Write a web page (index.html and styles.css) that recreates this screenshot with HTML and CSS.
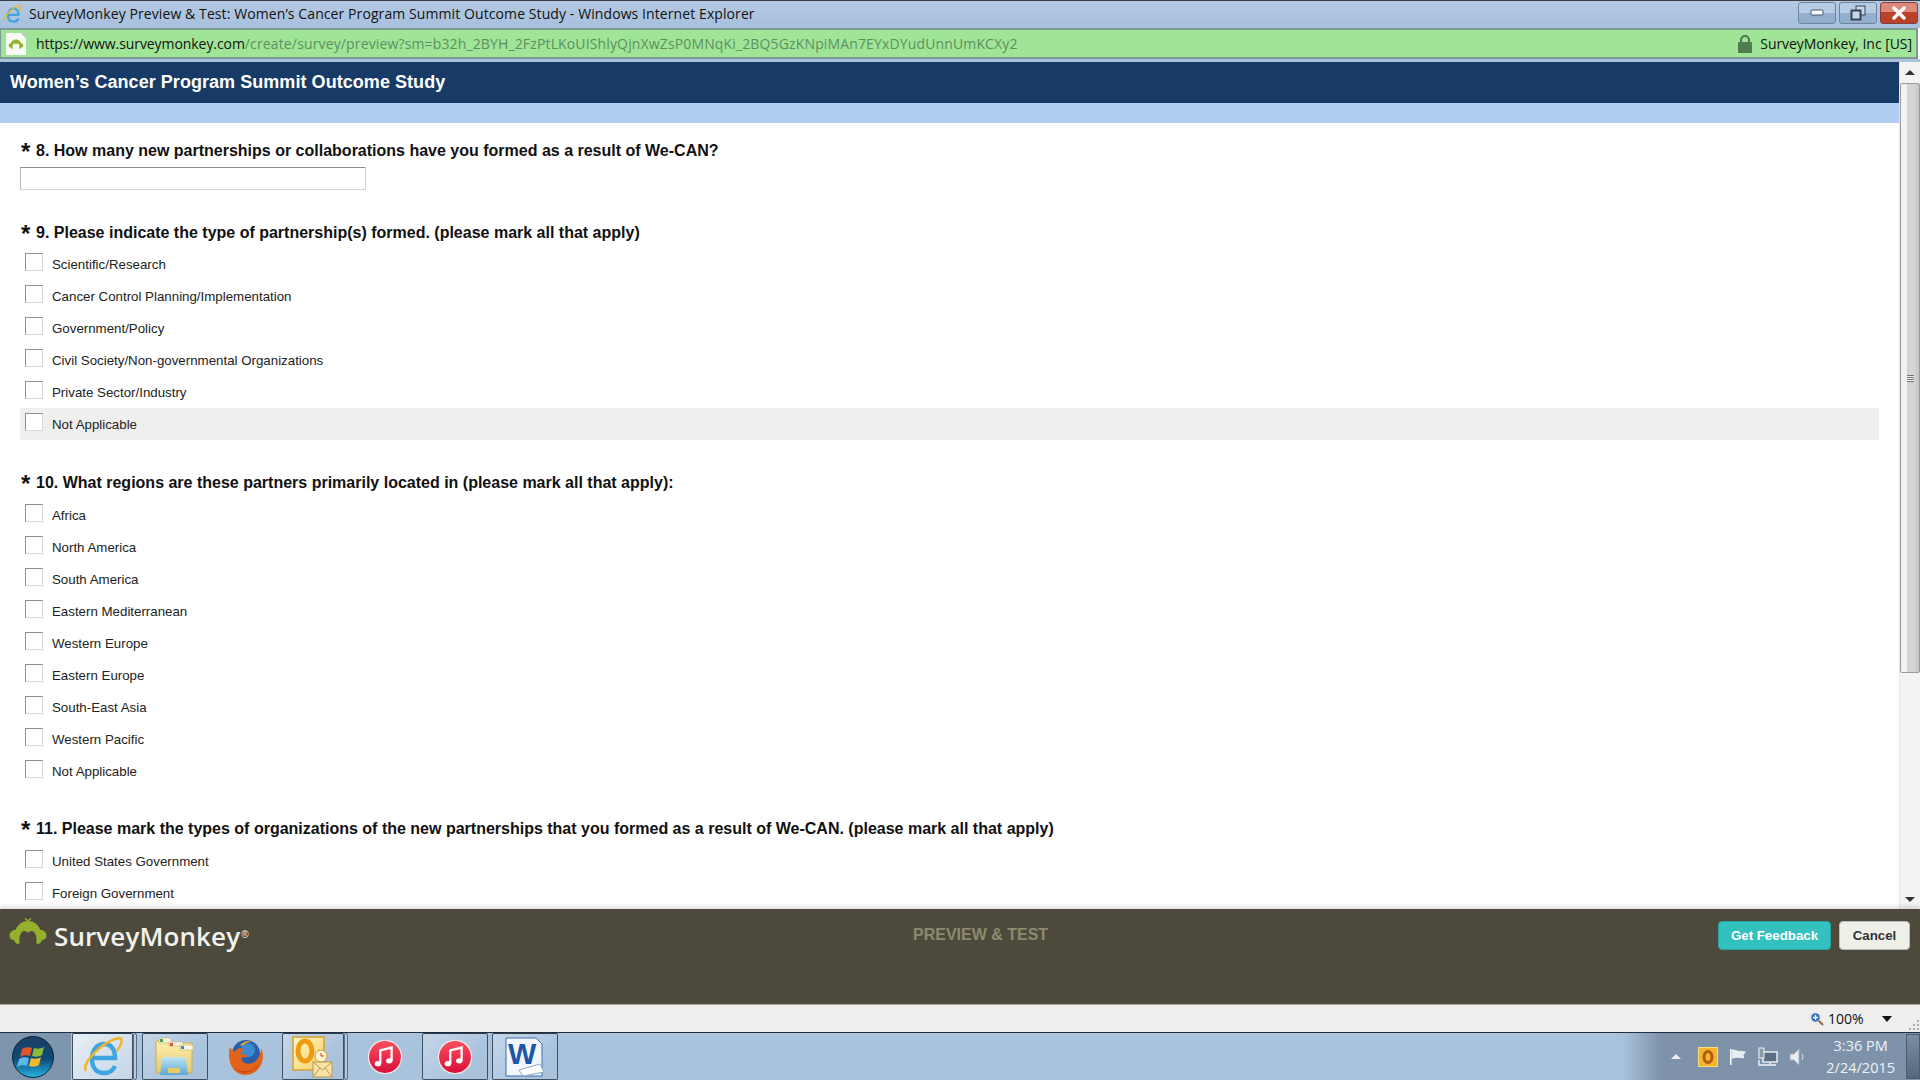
FILE: index.html
```html
<!DOCTYPE html>
<html lang="en">
<head>
  <meta charset="UTF-8">
  <title>SurveyMonkey Preview &amp; Test</title>
  <link rel="stylesheet" href="styles.css">
</head>
<body>

  <div class="title-bar">
    <svg width="20" height="22" viewBox="0 0 44 44">
      <path d="M11 24h23c0-9-4-14-11-14S11 16 11 25s5 14 12 14c5 0 9-2 11-7" fill="none" stroke="#3ea5e0" stroke-width="5"/>
      <path d="M5 36C0 28 22 6 38 3c5 0 2 8-2 13" fill="none" stroke="#f0b62a" stroke-width="3"/>
    </svg>
    <span class="title-text">SurveyMonkey Preview &amp; Test: Women’s Cancer Program Summit Outcome Study - Windows Internet Explorer</span>
    <div class="window-buttons">
      <div class="win-btn">
        <svg width="14" height="8" viewBox="0 0 14 8"><rect x="1" y="1" width="12" height="5" rx="1" fill="#fff" stroke="#44566b"/></svg>
      </div>
      <div class="win-btn">
        <svg width="16" height="16" viewBox="0 0 16 16"><rect x="6" y="1" width="9" height="9" fill="#c9d6e4" stroke="#33445a"/><rect x="1.5" y="5.5" width="9" height="9" fill="#c9d6e4" stroke="#33445a" stroke-width="2"/></svg>
      </div>
      <div class="win-btn win-close">
        <svg width="16" height="14" viewBox="0 0 16 14"><path d="M3 2l10 10M13 2L3 12" stroke="#fff" stroke-width="3.4" stroke-linecap="round"/></svg>
      </div>
    </div>
  </div>

  <div class="address-bar">
    <div class="page-icon">
      <svg width="16" height="12" viewBox="0 0 40 28">
        <path d="M20 3C27 3 31 8 32.500 12C35 12 38.500 14 38.500 17.500C38.500 21 36 22 34 22C33 24.500 31.500 26 30 26C28.500 26 28 25 28.500 23C29 18 27 13 23.500 13C22 13 20.500 14 20 15C19.500 14 18 13 16.500 13C13 13 11 18 11.500 23C12 25 11.500 26 10 26C8.500 26 7 24.500 6 22C4 22 1.500 21 1.500 17.500C1.500 14 5 12 7.500 12C9 8 13 3 20 3Z" fill="#8fb22c"/>
      </svg>
    </div>
    <div class="url"><span class="url-main">https://www.surveymonkey.com</span>/create/survey/preview?sm=b32h_2BYH_2FzPtLKoUIShlyQjnXwZsP0MNqKi_2BQ5GzKNpiMAn7EYxDYudUnnUmKCXy2</div>
    <svg class="lock" width="16" height="18" viewBox="0 0 16 18">
      <path d="M4 8V5a4 4 0 0 1 8 0v3" fill="none" stroke="#517c4f" stroke-width="2.2"/>
      <rect x="1" y="7" width="14" height="11" rx="1" fill="#517c4f"/>
    </svg>
    <span class="site-name">SurveyMonkey, Inc [US]</span>
  </div>

  <div class="page-area">
    <div class="page">
      <div class="survey-title">Women’s Cancer Program Summit Outcome Study</div>
      <div class="survey-band"></div>

      <div class="question q8">
        <div class="q-title"><span class="req">*</span>8. How many new partnerships or collaborations have you formed as a result of We-CAN?</div>
        <div class="text-input"></div>
      </div>

      <div class="question q9">
        <div class="q-title"><span class="req">*</span>9. Please indicate the type of partnership(s) formed. (please mark all that apply)</div>
        <div class="option"><span class="check"></span>Scientific/Research</div>
        <div class="option"><span class="check"></span>Cancer Control Planning/Implementation</div>
        <div class="option"><span class="check"></span>Government/Policy</div>
        <div class="option"><span class="check"></span>Civil Society/Non-governmental Organizations</div>
        <div class="option"><span class="check"></span>Private Sector/Industry</div>
        <div class="option option-hover"><span class="check"></span>Not Applicable</div>
      </div>

      <div class="question q10">
        <div class="q-title"><span class="req">*</span>10. What regions are these partners primarily located in (please mark all that apply):</div>
        <div class="option"><span class="check"></span>Africa</div>
        <div class="option"><span class="check"></span>North America</div>
        <div class="option"><span class="check"></span>South America</div>
        <div class="option"><span class="check"></span>Eastern Mediterranean</div>
        <div class="option"><span class="check"></span>Western Europe</div>
        <div class="option"><span class="check"></span>Eastern Europe</div>
        <div class="option"><span class="check"></span>South-East Asia</div>
        <div class="option"><span class="check"></span>Western Pacific</div>
        <div class="option"><span class="check"></span>Not Applicable</div>
      </div>

      <div class="question q11">
        <div class="q-title"><span class="req">*</span>11. Please mark the types of organizations of the new partnerships that you formed as a result of We-CAN. (please mark all that apply)</div>
        <div class="option"><span class="check"></span>United States Government</div>
        <div class="option"><span class="check"></span>Foreign Government</div>
      </div>
    </div>

    <div class="scrollbar">
      <div class="scroll-arrow"><svg width="10" height="6" viewBox="0 0 12 7"><path d="M6 0l6 6H0z" fill="#333"/></svg></div>
      <div class="scroll-track">
        <div class="scroll-thumb"><span class="grip"></span></div>
      </div>
      <div class="scroll-arrow"><svg width="10" height="6" viewBox="0 0 12 7"><path d="M6 7l6-6H0z" fill="#333"/></svg></div>
    </div>
  </div>

  <div class="preview-bar">
    <div class="logo">
      <svg width="40" height="28" viewBox="0 0 40 28">
        <path d="M20 3L17 .5M20 3l3-3" stroke="#94b02c" stroke-width="1.4"/>
        <path d="M20 3C27 3 31 8 32.500 12C35 12 38.500 14 38.500 17.500C38.500 21 36 22 34 22C33 24.500 31.500 26 30 26C28.500 26 28 25 28.500 23C29 18 27 13 23.500 13C22 13 20.500 14 20 15C19.500 14 18 13 16.500 13C13 13 11 18 11.500 23C12 25 11.500 26 10 26C8.500 26 7 24.500 6 22C4 22 1.500 21 1.500 17.500C1.500 14 5 12 7.500 12C9 8 13 3 20 3Z" fill="#94b02c"/>
      </svg>
      <span class="logo-text">SurveyMonkey</span><span class="logo-reg">®</span>
    </div>
    <div class="preview-label">PREVIEW &amp; TEST</div>
    <div class="preview-buttons">
      <button class="btn-feedback">Get Feedback</button>
      <button class="btn-cancel">Cancel</button>
    </div>
  </div>

  <div class="status-bar">
    <svg class="zoom-icon" width="14" height="14" viewBox="0 0 14 14">
      <path d="M8 8l5 5" stroke="#8a6a3c" stroke-width="2"/>
      <circle cx="5.500" cy="5.500" r="4.500" fill="#2f6db5" stroke="#b9cbe0"/>
      <path d="M3 5.500h5M5.500 3v5" stroke="#fff" stroke-width="1.400"/>
    </svg>
    <span class="zoom-text">100%</span>
    <svg class="zoom-arrow" width="10" height="6" viewBox="0 0 10 6"><path d="M0 0h10L5 6z" fill="#111"/></svg>
    <svg class="grip-corner" width="12" height="12" viewBox="0 0 12 12" fill="#aaa">
      <rect x="9" y="1" width="2" height="2"/><rect x="5" y="5" width="2" height="2"/><rect x="9" y="5" width="2" height="2"/>
      <rect x="1" y="9" width="2" height="2"/><rect x="5" y="9" width="2" height="2"/><rect x="9" y="9" width="2" height="2"/>
    </svg>
  </div>

  <div class="taskbar">
    <div class="start">
      <svg width="44" height="44" viewBox="0 0 44 44">
        <defs>
          <linearGradient id="orb" x1="0" y1="0" x2="0" y2="1">
            <stop offset="0" stop-color="#1b3f63"/>
            <stop offset=".55" stop-color="#0f4a78"/>
            <stop offset="1" stop-color="#25b7e6"/>
          </linearGradient>
          <linearGradient id="tunes" x1="0" y1="0" x2="0" y2="1">
            <stop offset="0" stop-color="#fb4f5f"/>
            <stop offset="1" stop-color="#d80f3a"/>
          </linearGradient>
          <linearGradient id="folder" x1="0" y1="0" x2="0" y2="1">
            <stop offset="0" stop-color="#fdf0ae"/>
            <stop offset="1" stop-color="#e6c970"/>
          </linearGradient>
          <linearGradient id="glass" x1="0" y1="0" x2="0" y2="1">
            <stop offset="0" stop-color="#bfe4f2"/>
            <stop offset="1" stop-color="#5ba8d4"/>
          </linearGradient>
          <linearGradient id="sheet" x1="0" y1="0" x2="1" y2="1">
            <stop offset="0" stop-color="#fff7c4"/>
            <stop offset="1" stop-color="#f4cf68"/>
          </linearGradient>
        </defs>
        <circle cx="22" cy="22" r="20.500" fill="url(#orb)" stroke="#0d2238"/>
        <path d="M11 14c3-2 7-2 10-1l-2 8c-3-1-7-1-10 1z" fill="#e2562c"/>
        <path d="M23 13c3 1 6 1 10-1l-2 8c-3 2-7 2-10 1z" fill="#8db93a"/>
        <path d="M8 24c3-2 7-2 10-1l-2 8c-3-1-7-1-10 1z" fill="#5fb6ea"/>
        <path d="M20 23c3 1 7 1 10-1l-2 8c-3 2-7 2-10 1z" fill="#f2b92e"/>
      </svg>
    </div>
    <div class="task-btn task-light">
      <svg width="44" height="44" viewBox="0 0 44 44">
        <path d="M11 23h23c0-9-4-14-11-14S11 15 11 24s5 14 12 14c5 0 9-2 11-7" fill="none" stroke="#3ea5e0" stroke-width="4.500"/>
        <path d="M5 36C0 28 22 6 38 3c5 0 2 8-2 13" fill="none" stroke="#f0b62a" stroke-width="2.400"/>
      </svg>
    </div>
    <span class="task-sep task-sep-gap"></span>
    <div class="task-btn">
      <svg width="42" height="40" viewBox="0 0 42 40">
        <path d="M2 4h10l2 2h24v30H2z" fill="url(#folder)" stroke="#c8ab5a"/>
        <rect x="5" y="1" width="12" height="5" fill="#f8f6ea" stroke="#c8ab5a" stroke-width=".6"/>
        <rect x="6" y="2" width="3" height="3" fill="#4ea24c"/>
        <rect x="15" y="5" width="14" height="4" fill="#f8f6ea" stroke="#c8ab5a" stroke-width=".6"/>
        <rect x="16" y="6" width="3" height="3" fill="#d0503c"/>
        <rect x="26" y="8" width="13" height="5" fill="#f8f6ea" stroke="#c8ab5a" stroke-width=".6"/>
        <rect x="27" y="9" width="3" height="3" fill="#3a8ac8"/>
        <path d="M8 22c0-1 1-2 2-2h20c1 0 2 1 2 2l2 16H6z" fill="url(#glass)"/>
        <rect x="14" y="31" width="12" height="5" fill="#eccb62"/>
      </svg>
    </div>
    <div class="task-plain">
      <svg width="38" height="38" viewBox="0 0 38 38">
        <circle cx="20" cy="16" r="14" fill="#2a5ea8"/>
        <circle cx="22" cy="12" r="7" fill="#3c8ad0"/>
        <path d="M4 9c-3 9 0 27 15 28 11 0 18-9 18-19 0-3-1-6-2-8 0 4-1 7-3 10-3 5-9 7-13 5-3-1-4-4-3-6 2 1 5 0 6-1-2-1-5-2-6-1-1-2 0-4 2-6C13 9 10 11 9 14 7 13 5 11 4 9z" fill="#e4631c"/>
        <path d="M9 30c7 6 19 4 24-5-3 9-17 14-24 5z" fill="#c83a1a"/>
        <path d="M14 7c4-4 9-5 14-4-5 0-9 2-12 5z" fill="#f6a92f"/>
      </svg>
    </div>
    <div class="task-btn task-outlook">
      <svg width="42" height="42" viewBox="0 0 42 42">
        <rect x="1" y="1" width="31" height="33" fill="url(#sheet)" stroke="#d89a28" stroke-width="1.400"/>
        <ellipse cx="13" cy="15" rx="7" ry="10" fill="none" stroke="#ee9a12" stroke-width="5"/>
        <circle cx="29" cy="20" r="6" fill="#fff3cf" stroke="#d09a3a"/>
        <path d="M29 17v3h3" fill="none" stroke="#b9481e"/>
        <rect x="21" y="26" width="19" height="15" fill="#f8e2a4" stroke="#b99a54"/>
        <path d="M21 26l9.500 8 9.500-8M21 41l7-9M40 41l-7-9" fill="none" stroke="#b99a54"/>
      </svg>
    </div>
    <span class="task-sep"></span>
    <div class="task-plain">
      <svg width="36" height="36" viewBox="0 0 38 38">
        <circle cx="19" cy="19" r="17.500" fill="url(#tunes)" stroke="#f2e6e8" stroke-width="1.400"/>
        <path d="M14 26V12l12-3v14" fill="none" stroke="#fff" stroke-width="2.400"/>
        <ellipse cx="11.500" cy="26" rx="3.400" ry="2.800" fill="#fff"/>
        <ellipse cx="23.500" cy="23" rx="3.400" ry="2.800" fill="#fff"/>
      </svg>
    </div>
    <div class="task-btn">
      <svg width="36" height="36" viewBox="0 0 38 38">
        <circle cx="19" cy="19" r="17.500" fill="url(#tunes)" stroke="#f2e6e8" stroke-width="1.400"/>
        <path d="M14 26V12l12-3v14" fill="none" stroke="#fff" stroke-width="2.400"/>
        <ellipse cx="11.500" cy="26" rx="3.400" ry="2.800" fill="#fff"/>
        <ellipse cx="23.500" cy="23" rx="3.400" ry="2.800" fill="#fff"/>
      </svg>
    </div>
    <div class="task-btn task-word">
      <svg width="40" height="40" viewBox="0 0 40 40">
        <path d="M1 1h30l6 6v32H1z" fill="#f2f6fb" stroke="#3f6fb0"/>
        <path d="M14 33l21-6 4 8-21 4z" fill="#fff" stroke="#8fa8c4"/>
        <text x="3" y="27" class="word-letter">W</text>
      </svg>
    </div>

    <div class="tray">
      <svg width="10" height="6" viewBox="0 0 12 7"><path d="M6 0l6 6H0z" fill="#e8edf3"/></svg>
      <svg class="tray-outlook" width="20" height="20" viewBox="0 0 20 20"><rect x="0.500" y="0.500" width="19" height="19" fill="#f2b52e" stroke="#f8dc80"/><ellipse cx="10" cy="10" rx="4" ry="5.500" fill="none" stroke="#b5561a" stroke-width="3"/></svg>
      <svg width="18" height="20" viewBox="0 0 20 20"><path d="M2 1v18" stroke="#fff" stroke-width="1.600"/><path d="M3 2c4-1 6 2 10 1l6 1-3 4 1 3c-4 1-6-1-10 0l-4 1z" fill="#e8edf3"/></svg>
      <svg width="20" height="20" viewBox="0 0 20 20"><rect x="5" y="5" width="14" height="10" fill="#5b6f84" stroke="#f0f3f6" stroke-width="1.400"/><rect x="1" y="1" width="5" height="10" fill="#8a9aa8" stroke="#f0f3f6"/><path d="M1 13v5h17M12 15v3" stroke="#f0f3f6" stroke-width="1.400" fill="none"/></svg>
      <svg width="18" height="20" viewBox="0 0 18 20"><path d="M1 7h4l5-5v16l-5-5H1z" fill="#e8edf3" stroke="#aab"/><path d="M13 7q2 3 0 6" fill="none" stroke="#dde4ea"/></svg>
      <div class="clock">
        <div>3:36 PM</div>
        <div>2/24/2015</div>
      </div>
    </div>
    <div class="show-desktop"></div>
  </div>

</body>
</html>
```

FILE: styles.css
```css
* {
  margin: 0;
  padding: 0;
  box-sizing: border-box;
}

body {
  width: 1920px;
  height: 1080px;
  overflow: hidden;
  display: flex;
  flex-direction: column;
  font-family: "Liberation Sans", Arial, sans-serif;
  background-color: #fff;
}

svg {
  flex-shrink: 0;
  display: block;
}

/* window chrome */
.title-bar {
  height: 28px;
  display: flex;
  align-items: center;
  padding-left: 3px;
  padding-bottom: 2px;
  border-top: 1px solid #3a3f45;
  background: linear-gradient(#b4c9e2, #a6c0dd);
}

.title-text {
  margin-left: 6px;
  font-family: "Open Sans", sans-serif;
  font-size: 14px;
  color: #111;
  letter-spacing: 0.09px;
  white-space: nowrap;
}

.window-buttons {
  margin-left: auto;
  margin-right: 2px;
  margin-top: -1px;
  display: flex;
  gap: 3px;
}

.win-btn {
  width: 38px;
  height: 22px;
  display: flex;
  align-items: center;
  justify-content: center;
  border: 1px solid #6d85a0;
  border-radius: 3px;
  background: linear-gradient(#b6cce3 50%, #93afcd 50%);
}

.win-close {
  border-color: #8a3d3d;
  background: linear-gradient(#dc8a78 45%, #b8432a 45%);
}

.address-bar {
  height: 31px;
  margin: 0 2px 0 0;
  display: flex;
  align-items: center;
  border: 2px solid #7d9a96;
  border-left-width: 1px;
  background-color: #a0e597;
}

.page-icon {
  width: 20px;
  height: 22px;
  margin-left: 5px;
  display: flex;
  align-items: center;
  justify-content: center;
  background: linear-gradient(225deg, #c9c9c0 4px, #fbfbf6 4px);
}

.url {
  margin-left: 10px;
  font-family: "Open Sans", sans-serif;
  font-size: 14px;
  letter-spacing: 0.14px;
  color: #5d8f60;
  white-space: nowrap;
}

.url-main {
  color: #111;
  letter-spacing: -0.07px;
}

.lock {
  margin-left: auto;
}

.site-name {
  margin-left: 7px;
  margin-right: 4px;
  font-family: "Open Sans", sans-serif;
  font-size: 14px;
  letter-spacing: -0.05px;
  color: #111;
  white-space: nowrap;
}

/* survey page */
.page-area {
  height: 850px;
  display: flex;
  border-top: 3px solid #a9c3df;
  overflow: hidden;
}

.page {
  width: 1899px;
  flex-shrink: 0;
}

.survey-title {
  height: 41px;
  padding-left: 10px;
  display: flex;
  align-items: center;
  font-size: 18px;
  font-weight: bold;
  letter-spacing: 0.05px;
  color: #fff;
  background-color: #173b66;
}

.survey-band {
  height: 20px;
  background-color: #b1cdf2;
}

.question {
  padding-left: 20px;
}

.q-title {
  height: 22px;
  display: flex;
  align-items: center;
  font-size: 16px;
  font-weight: bold;
  color: #111;
  white-space: pre;
}

.req {
  width: 16px;
  padding-left: 1px;
  padding-top: 1px;
  font-size: 24px;
  line-height: 22px;
}

.q8 {
  padding-top: 17px;
}

.text-input {
  width: 346px;
  height: 23px;
  margin-top: 5px;
  background-color: #fff;
  border: 1px solid #d4d4d4;
  border-top-color: #8f8f8f;
  border-left-color: #bbb;
}

.q9 {
  padding-top: 32px;
}

.q9 .q-title {
  margin-bottom: 4px;
}

.q10 {
  padding-top: 32px;
}

.q10 .q-title {
  margin-bottom: 5px;
}

.q11 {
  padding-top: 31px;
}

.q11 .q-title {
  margin-bottom: 5px;
}

.option {
  width: 1859px;
  height: 32px;
  display: flex;
  align-items: flex-start;
  font-size: 13.3px;
  color: #222;
  line-height: 34px;
}

.option-hover {
  background-color: #efefed;
}

.check {
  width: 18px;
  height: 18px;
  margin: 5px 9px 0 5px;
  background-color: #fff;
  border: 1px solid #d8d8d8;
  border-top-color: #909090;
  border-left-color: #909090;
}

/* scrollbar */
.scrollbar {
  width: 21px;
  display: flex;
  flex-direction: column;
  background-color: #f3f3f3;
  border-left: 1px solid #e6e6e6;
}

.scroll-arrow {
  height: 21px;
  display: flex;
  align-items: center;
  justify-content: center;
}

.scroll-track {
  flex: 1;
}

.scroll-thumb {
  height: 590px;
  display: flex;
  align-items: center;
  justify-content: center;
  border: 1px solid #9b9b9b;
  border-radius: 2px;
  background: linear-gradient(90deg, #f2f2f2 30%, #d4d4d4 35%, #d4d4d4 75%, #c4c4c4);
}

.grip {
  width: 7px;
  height: 7px;
  background: repeating-linear-gradient(#777 0 1px, #eee 1px 2px);
}

/* preview bar */
.preview-bar {
  height: 95px;
  display: flex;
  align-items: flex-start;
  background-color: #4d4a3d;
  box-shadow: 0 -3px 4px rgba(0, 0, 0, 0.12);
  position: relative;
}

.logo {
  width: 912px;
  padding: 9px 0 0 8px;
  display: flex;
  align-items: flex-start;
  color: #f1f1ee;
}

.logo-text {
  margin-left: 6px;
  margin-top: 2px;
  font-family: "Open Sans", sans-serif;
  font-size: 26px;
  font-weight: 600;
  line-height: 32px;
  letter-spacing: 0.1px;
}

.logo-reg {
  margin-left: 1px;
  margin-top: 11px;
  font-size: 10px;
}

.preview-label {
  margin-top: 17px;
  margin-left: 1px;
  font-size: 16px;
  font-weight: bold;
  color: #8b8a6e;
}

.preview-buttons {
  margin-left: auto;
  margin-right: 10px;
  margin-top: 12px;
  display: flex;
  gap: 8px;
}

.preview-buttons button {
  height: 29px;
  font-family: "Liberation Sans", Arial, sans-serif;
  font-size: 13.3px;
  font-weight: bold;
  border-radius: 4px;
}

.btn-feedback {
  width: 113px;
  color: #fff;
  background-color: #33c0bf;
  border: 1px solid #26a3a2;
}

.btn-cancel {
  width: 71px;
  color: #333;
  background-color: #efefe9;
  border: 1px solid #bbb;
}

/* status bar */
.status-bar {
  height: 28px;
  display: flex;
  align-items: center;
  padding-left: 1810px;
  background-color: #f0eded;
  border-top: 1px solid #a5a5a5;
  position: relative;
}

.zoom-text {
  margin-left: 4px;
  font-family: "Open Sans", sans-serif;
  font-size: 14px;
  color: #111;
}

.zoom-arrow {
  margin-left: 18px;
}

.grip-corner {
  position: absolute;
  right: 0;
  bottom: 1px;
}

/* taskbar */
.taskbar {
  flex: 1;
  display: flex;
  align-items: stretch;
  background: linear-gradient(90deg, #a9c3dd 84.500%, #7e92aa 86.500%);
  border-top: 1px solid #1f2d3d;
}

.start {
  width: 71px;
  margin-right: 1px;
  padding-right: 5px;
  display: flex;
  align-items: center;
  justify-content: center;
  background-color: #7e95ae;
}

.task-btn,
.task-plain {
  width: 66px;
  display: flex;
  align-items: center;
  justify-content: center;
}

.task-btn {
  border: 1px solid #3d4f63;
  border-top-color: #2a3a4c;
  border-radius: 2px;
  background: linear-gradient(135deg, #c5d6e8, #a9c3dd 70%);
}

.task-light {
  width: 61px;
  background: linear-gradient(135deg, #e9eff6, #c4d5e6);
}

.task-outlook {
  width: 62px;
}

.task-word {
  margin-left: 4px;
}

.task-sep {
  width: 4px;
  border: 1px solid #5b6e84;
  border-radius: 2px;
  background-color: #b4cadf;
}

.task-sep-gap {
  margin-right: 5px;
}

.task-plain {
  width: 74px;
}

.word-letter {
  font-family: "Liberation Sans", Arial, sans-serif;
  font-size: 30px;
  font-weight: bold;
  fill: #1d56a8;
}

.tray {
  margin-left: auto;
  display: flex;
  align-items: center;
  gap: 11px;
  color: #eef2f6;
}

.tray-outlook {
  margin-left: 6px;
}

.clock {
  margin-left: 8px;
  margin-right: 11px;
  font-family: "Open Sans", sans-serif;
  font-size: 14.5px;
  line-height: 22px;
  text-align: center;
}

.show-desktop {
  width: 14px;
  margin: 1px 0;
  border: 1px solid #4b5d70;
  background: linear-gradient(#7a8da3, #56687c);
}
```
